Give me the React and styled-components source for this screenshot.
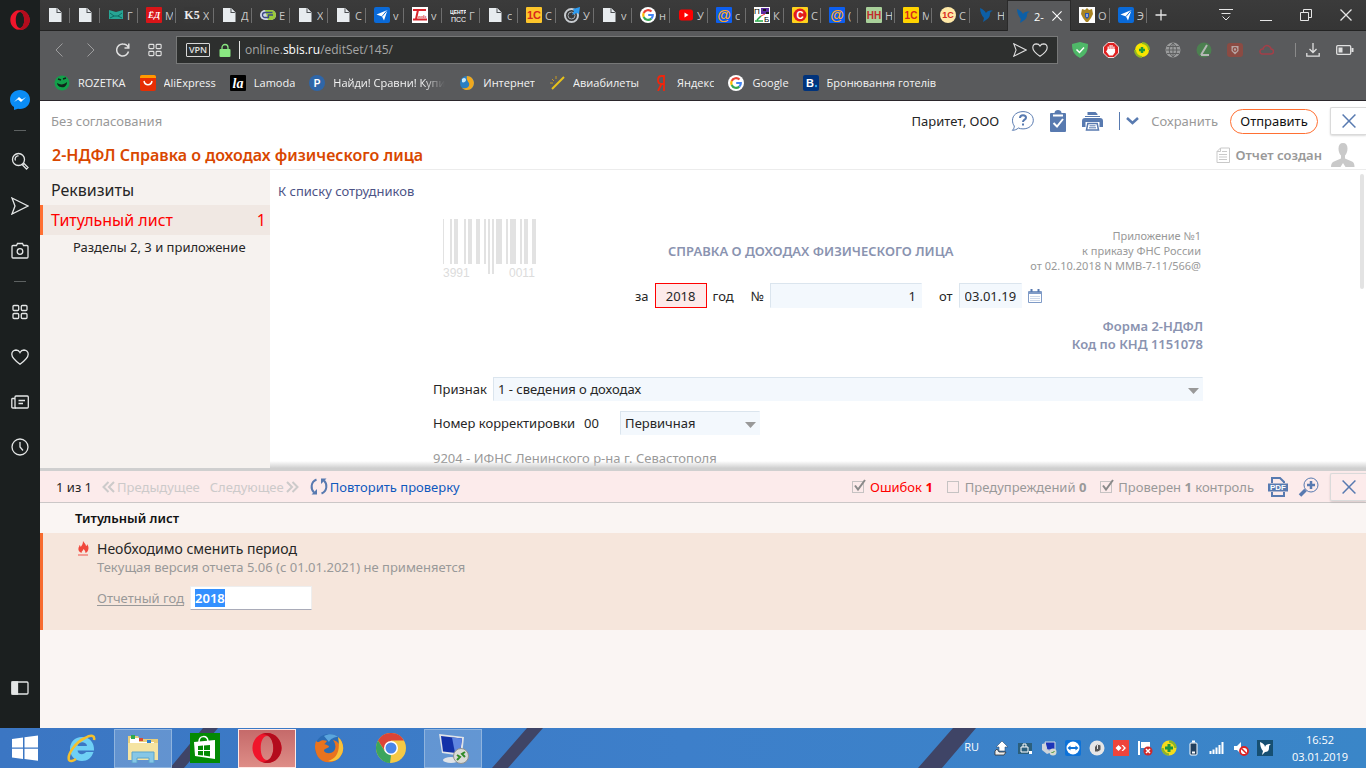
import React, { useEffect, useRef } from 'react'
import styled, { createGlobalStyle } from 'styled-components'

const GlobalStyle = createGlobalStyle`
  * { box-sizing: border-box; }
  body { margin: 0; font-family: "Noto Sans", "Open Sans", sans-serif; font-size: 13px; color: #262626; }
  button, input, select { font: inherit; color: inherit; margin: 0; }
  button { border: 0; padding: 0; background: none; cursor: pointer; }
  a { color: inherit; text-decoration: none; }
  svg { display: block; flex: none; }
`

/* ---------- shell ---------- */

const Screen = styled.div`
  display: flex;
  flex-direction: column;
  height: 100vh;
  overflow: hidden;
`
const Workspace = styled.div`
  display: flex;
  flex: 1;
  min-height: 0;
`
const Browser = styled.div`
  display: flex;
  flex-direction: column;
  flex: 1;
  min-width: 0;
`

/* ---------- opera sidebar ---------- */

const OperaBar = styled.nav`
  display: flex;
  flex-direction: column;
  align-items: center;
  width: 40px;
  background: #1b1f1f;
  color: #e4e6e6;
`
const SideButton = styled.button`
  display: grid;
  place-items: center;
  width: 40px;
  height: ${(p) => p.$h || 45}px;
  margin-top: ${(p) => p.$top || '0'};
  margin-bottom: ${(p) => p.$bottom || '0'};
`
const Dash = styled.span`
  width: 12px;
  height: 1px;
  margin: 8px 0 7px;
  background: #5d6161;
`

/* ---------- tabs ---------- */

const TabStrip = styled.div`
  display: flex;
  height: 31px;
  background: linear-gradient(#3b3b3b, #353535);
  border-bottom: 1px solid #232323;
  color: #c9c9c9;
  font: 11px "Open Sans", sans-serif;
`
const Tab = styled.button`
  position: relative;
  display: flex;
  align-items: center;
  gap: 3px;
  flex: 0 1 ${(p) => p.$w}px;
  height: 30px;
  padding: 0 3px 0 8px;
  overflow: hidden;
  &::after {
    content: '';
    position: absolute;
    right: 0;
    top: 8px;
    width: 1px;
    height: 15px;
    background: ${(p) => (p.$plain ? 'transparent' : '#6e6e6e')};
  }
`
const TabLabel = styled.span`
  overflow: hidden;
  white-space: nowrap;
`
const ActiveTab = styled.div`
  display: flex;
  align-items: center;
  gap: 3px;
  width: 64px;
  height: 31px;
  padding: 0 8px 0 7px;
  background: #595a5c;
  border: 1px solid #2a2a2a;
  border-bottom: 0;
  color: #ffffff;
  ${TabLabel} { flex: 1; }
`
const WindowButtons = styled.div`
  display: flex;
  margin-left: auto;
  color: #e6e6e6;
`
const WindowButton = styled.button`
  display: grid;
  place-items: center;
  width: ${(p) => p.$w || 40}px;
  height: 30px;
  color: #e6e6e6;
`

/* ---------- address row ---------- */

const AddressRow = styled.div`
  display: flex;
  align-items: center;
  height: 38px;
  background: #595a5c;
  color: #e0e0e0;
`
const NavButton = styled.button`
  display: grid;
  place-items: center;
  width: 32px;
  height: 32px;
  opacity: ${(p) => (p.disabled ? 0.5 : 1)};
`
const NavGroup = styled.div`
  display: flex;
  padding: 0 5px 0 3px;
`
const UrlBox = styled.div`
  display: flex;
  align-items: center;
  flex: 1;
  height: 28px;
  padding: 0 9px;
  background: #2d2f2e;
  border: 1px solid #777878;
  font: 12px "Open Sans", sans-serif;
`
const Vpn = styled.span`
  width: 24px;
  height: 14px;
  margin-right: 9px;
  border: 1px solid #d8d8d8;
  border-radius: 1px;
  font-size: 9px;
  font-weight: 600;
  line-height: 12px;
  text-align: center;
`
const Url = styled.span`
  flex: 1;
  margin-left: 8px;
  padding-left: 5px;
  border-left: 1px solid #e6e6e6;
  line-height: 18px;
  color: #a5a6a6;
  b { color: #ffffff; font-weight: 400; }
`
const UrlActions = styled.div`
  display: flex;
  gap: 5px;
`
const Extensions = styled.div`
  display: flex;
  align-items: center;
  gap: 15px;
  padding: 0 21px 0 14px;
`
const BrowserTools = styled.div`
  display: flex;
  align-items: center;
  gap: 16px;
  padding: 0 12px 0 10px;
  border-left: 1px solid #8a8a8a;
`
const Bookmarks = styled.div`
  display: flex;
  align-items: center;
  gap: 14px;
  height: 32px;
  padding: 0 14px 4px;
  background: #595a5c;
  border-bottom: 1px solid #2b272c;
  color: #f3f3f3;
  font: 11px "Open Sans", sans-serif;
`
const Bookmark = styled.a`
  display: flex;
  align-items: center;
  gap: 8px;
  white-space: nowrap;
`
const BookmarkLabel = styled.span`
  width: ${(p) => (p.$fade ? '112px' : 'auto')};
  overflow: hidden;
  mask-image: ${(p) => (p.$fade ? 'linear-gradient(90deg, #000 80%, transparent)' : 'none')};
`

/* ---------- report page ---------- */

const Page = styled.main`
  display: flex;
  flex-direction: column;
  flex: 1;
  min-height: 0;
  background: #ffffff;
`
const ReportHeader = styled.header`
  border-bottom: 1px solid #ececec;
`
const TopLine = styled.div`
  display: flex;
  align-items: center;
  height: 40px;
  padding-left: 11px;
  color: #999999;
`
const TopActions = styled.div`
  display: flex;
  align-items: center;
  gap: 12px;
  margin-left: auto;
`
const Company = styled.span`
  color: #262626;
`
const IconButton = styled.button`
  display: grid;
  place-items: center;
  height: 25px;
  color: #587ab0;
`
const MoreButton = styled(IconButton)`
  height: 18px;
  padding-left: 6px;
  margin-left: 4px;
  border-left: 1px solid #587ab0;
`
const SendButton = styled.button`
  width: 88px;
  height: 25px;
  border: 1px solid #ff7033;
  border-radius: 13px;
  color: #111111;
`
const CloseButton = styled.button`
  display: grid;
  place-items: center;
  width: 36px;
  height: 28px;
  border: 1px solid #dadada;
  border-right: 0;
  border-radius: 2px 0 0 2px;
  box-shadow: 0 1px 2px rgba(0, 0, 0, 0.15);
  color: #587ab0;
`
const TitleLine = styled.div`
  display: flex;
  align-items: center;
  height: 28px;
  padding: 0 11px 0 12px;
`
const ReportTitle = styled.h1`
  margin: 0;
  color: #d94700;
  font-size: 16px;
  font-weight: 600;
  line-height: 24px;
`
const Status = styled.div`
  display: flex;
  align-items: center;
  gap: 5px;
  margin-left: auto;
  color: #999999;
  font-weight: 600;
`
const Split = styled.div`
  display: flex;
  flex: 1;
  min-height: 0;
`
const Sections = styled.nav`
  width: 230px;
  padding-top: 5px;
  background: #f6f2ef;
`
const Section = styled.a`
  display: flex;
  justify-content: space-between;
  align-items: center;
  height: 30px;
  padding: 0 4px 0 8px;
  border-left: 3px solid ${(p) => (p.$active ? '#ff7033' : 'transparent')};
  background: ${(p) => (p.$active ? '#f0e8e3' : 'transparent')};
  color: ${(p) => (p.$active ? '#ff0000' : '#262626')};
  font-size: 16px;
`
const SubSection = styled.a`
  display: block;
  padding-left: 33px;
  line-height: 24px;
`
const DocumentPane = styled.section`
  position: relative;
  flex: 1;
  overflow: hidden;
  &::after {
    content: '';
    position: absolute;
    inset: auto 0 0 0;
    height: 7px;
    background: linear-gradient(rgba(200, 200, 200, 0), #d0d0d0);
  }
`
const ScrollThumb = styled.div`
  position: absolute;
  top: 4px;
  right: 2px;
  width: 4px;
  height: 115px;
  border-radius: 2px;
  background: #e3e3e3;
`
const BackLink = styled.a`
  display: block;
  padding: 11px 0 16px 8px;
  color: #4c5386;
  line-height: 20px;
`
const Form = styled.form`
  width: 770px;
  max-width: 100%;
  margin: 0 auto;
`
const FormHead = styled.div`
  display: grid;
  grid-template-columns: 225px auto 1fr;
  align-items: center;
  height: 61px;
  padding: 0 2px 0 10px;
`
const FormTitle = styled.h2`
  margin: 6px 0 0;
  color: #8a93b0;
  font-size: 13px;
  font-weight: 600;
  line-height: 18px;
`
const Decree = styled.p`
  margin: 6px 0 0;
  color: #999999;
  font-size: 11px;
  line-height: 15px;
  text-align: right;
`
const Row = styled.div`
  display: flex;
  align-items: center;
  gap: ${(p) => p.$gap || 8}px;
  margin-top: ${(p) => p.$top || 0}px;
  padding-left: ${(p) => p.$left || 0}px;
`
const Field = styled.input`
  width: ${(p) => p.$w}px;
  height: 25px;
  padding: 0 5px;
  border: 1px solid #dbe5ee;
  border-right-color: #f3f8fd;
  border-bottom-color: #f3f8fd;
  background: #f3f8fd;
  text-align: ${(p) => p.$align || 'left'};
`
const YearField = styled(Field)`
  border-color: #ff0000;
  background: #fdeaea;
`
const PlainField = styled(Field)`
  padding: 0;
  border-color: transparent;
  background: transparent;
`
const FormCode = styled.p`
  margin: 9px 0 0;
  color: #8a93b0;
  font-weight: 600;
  line-height: 18px;
  text-align: right;
`
const SelectWrap = styled.span`
  position: relative;
  flex: ${(p) => (p.$w ? `0 0 ${p.$w}px` : '1')};
  svg { position: absolute; right: 4px; top: 11px; pointer-events: none; }
`
const Select = styled.select`
  display: block;
  width: 100%;
  height: 24px;
  padding: 0 4px;
  appearance: none;
  border: 1px solid #dbe5ee;
  border-right-color: #f3f8fd;
  border-bottom-color: #f3f8fd;
  border-radius: 0;
  background: #f3f8fd;
`
const Inspection = styled.p`
  margin: 13px 0 0;
  color: #999999;
  line-height: 20px;
`

/* ---------- check results ---------- */

const Results = styled.section`
  height: 260px;
  border-top: 3px solid #cfcfcf;
  background: #faf5f3;
`
const ResultsBar = styled.div`
  display: flex;
  align-items: center;
  height: 32px;
  padding-left: 16px;
  background: #fcebeb;
  border-bottom: 1px solid #cbc7c7;
`
const Pager = styled.button`
  display: flex;
  align-items: center;
  gap: 2px;
  margin-left: 10px;
  color: #cccaca;
`
const Recheck = styled.button`
  display: flex;
  align-items: center;
  gap: 2px;
  margin-left: 11px;
  color: #0f59bd;
`
const Filters = styled.div`
  display: flex;
  align-items: center;
  gap: 10px;
  margin-left: auto;
`
const Filter = styled.label`
  position: relative;
  display: flex;
  align-items: center;
  gap: 6px;
  margin-right: 4px;
  color: ${(p) => p.$color || '#999999'};
  input {
    width: 12px;
    height: 12px;
    appearance: none;
    border: 1px solid #c6c3c3;
  }
  svg { position: absolute; left: 0; top: 1px; }
`
const ResultTitle = styled.h3`
  margin: 0;
  padding-left: 35px;
  color: #111111;
  font-size: 13px;
  font-weight: 600;
  line-height: 30px;
`
const ErrorCard = styled.article`
  display: flex;
  gap: 7px;
  height: 97px;
  padding: 6px 0 0 33px;
  border-left: 3px solid #f76b2f;
  background: #f6e6dc;
`
const ErrorText = styled.p`
  margin: 0;
  font-size: ${(p) => (p.$note ? 13 : 14)}px;
  line-height: ${(p) => (p.$note ? 16 : 20)}px;
  color: ${(p) => (p.$note ? '#999999' : '#262626')};
`
const FixLabel = styled.label`
  color: #999999;
  text-decoration: underline;
  text-underline-offset: 2px;
`
const FixField = styled.input`
  width: 122px;
  height: 24px;
  padding: 0 4px;
  border: 1px solid #eeeeee;
  border-bottom-color: #a9abb8;
  background: #ffffff;
  outline: none;
  font-weight: 600;
  &::selection { background: #3390ff; color: #ffffff; }
`

/* ---------- taskbar ---------- */

const Taskbar = styled.footer`
  position: relative;
  display: flex;
  align-items: center;
  height: 40px;
  background: linear-gradient(90deg, #3b76c3, #3d7fca 50%, #3a86c8);
`
const Wallpaper = styled.svg`
  position: absolute;
  inset: 0;
  width: 100%;
  height: 40px;
`
const StartButton = styled.button`
  position: relative;
  display: grid;
  place-items: center;
  width: 50px;
  height: 40px;
`
const TaskButton = styled.button`
  position: relative;
  display: grid;
  place-items: center;
  width: 58px;
  height: 39px;
  margin: 0 2px;
  border: 1px solid ${(p) => (p.$open ? '#8fb4de' : 'transparent')};
  background: ${(p) => (p.$open ? 'rgba(255, 255, 255, 0.2)' : 'none')};
`
const OperaTask = styled(TaskButton)`
  border-color: #ffe9e6;
  background: linear-gradient(#c56a6a, #de8d87);
`
const Tray = styled.div`
  position: relative;
  display: flex;
  align-items: center;
  margin-left: auto;
  color: #ffffff;
  font: 11px "Open Sans", sans-serif;
`
const TrayButton = styled.button`
  display: grid;
  place-items: center;
  width: 24px;
  height: 40px;
`
const Language = styled.span`
  margin: 0 10px 4px 0;
`
const Clock = styled.time`
  width: 80px;
  margin: 0 6px 0 3px;
  line-height: 17px;
  text-align: center;
`

/* ---------- drawings ---------- */

const Icon = ({ size = 16, w, h, vb, children, ...rest }) => (
  <svg
    width={w || size}
    height={h || size}
    viewBox={vb || `0 0 ${w || size} ${h || size}`}
    fill="none"
    stroke="currentColor"
    aria-hidden="true"
    {...rest}
  >
    {children}
  </svg>
)

const DocFav = () => (
  <Icon stroke="none"><path d="M1 1h8l4.500 4.500V15H1z" fill="#e8ecef" /><path d="M8.500 1v5h5z" fill="#4a4d50" /><path d="M9.500 1.500v3.500h3.500z" fill="#e8ecef" /></Icon>
)
const TealFav = () => (
  <Icon stroke="none"><path d="M1 3l7 2 7-2v9H1z" fill="#27a595" /><path d="M2 6l4 3-4 2M14 6l-4 3 4 2M6 9h4" stroke="#0c6b62" /></Icon>
)
const LetterFav = ({ bg, fg, text, size = 11, font = 'Liberation Sans', round, italic, ring }) => (
  <Icon stroke="none">
    <rect width="16" height="16" rx={round ? 8 : 1} fill={bg} />
    {ring && <circle cx="8" cy="8" r="6.500" fill={ring} />}
    <text x="8" y={8 + size * 0.36} fill={fg} fontSize={size} fontWeight="700" fontStyle={italic ? 'italic' : 'normal'} fontFamily={font} textAnchor="middle">{text}</text>
  </Icon>
)
const GreenFav = () => (
  <Icon stroke="none"><rect x="0" y="3" width="16" height="10" rx="5" fill="#cfd6e6" /><path d="M5 3h6a5 5 0 015 5 5 5 0 01-5 5H8z" fill="#9acb3b" /><path d="M12.500 5.500H5a2.500 2.500 0 000 5h3.500V8H13" stroke="#3b4a86" strokeWidth="1.300" /></Icon>
)
const PlaneFav = () => (
  <Icon stroke="none"><rect width="16" height="16" rx="2" fill="#0a6ad8" /><path d="M2.500 7.500L13.500 3l-3.500 10.500-2-4z" fill="#fff" /><path d="M8 9.500L13.500 3" stroke="#0a6ad8" /></Icon>
)
const ToolsFav = () => (
  <Icon stroke="none"><rect width="16" height="16" fill="#fff" /><path d="M1 3h13M6 3L4 12M1 12.500h14" stroke="#d8232a" strokeWidth="2" /><text x="6" y="11" fill="#d8232a" fontSize="5" fontWeight="700" fontFamily="Liberation Serif" fontStyle="italic">ools</text></Icon>
)
const CenterFav = () => (
  <Icon stroke="none"><text x="0" y="7" fill="#fff" fontSize="5" fontFamily="Liberation Sans" fontWeight="700">ЦЕНТР</text><text x="1" y="15" fill="#fff" fontSize="7" fontFamily="Liberation Sans">ПСС</text></Icon>
)
const GaugeFav = () => (
  <Icon><circle cx="7.500" cy="8.500" r="6.500" stroke="#c8ccd0" strokeWidth="2" /><circle cx="7.500" cy="8.500" r="3.500" stroke="#a6acb2" /><path d="M8 8l2-4-1-2 7-2-1 7-2-1z" fill="#2d9bf0" stroke="none" /></Icon>
)
const GoogleFav = () => (
  <Icon stroke="none" strokeWidth="2.200">
    <circle cx="8" cy="8" r="8" fill="#fff" />
    <path d="M11.500 4.600A4.800 4.800 0 003.700 6" stroke="#ea4335" />
    <path d="M3.700 6a4.800 4.800 0 000 4" stroke="#fbbc05" />
    <path d="M3.700 10a4.800 4.800 0 007.600 1.600" stroke="#34a853" />
    <path d="M11.300 11.600A4.600 4.600 0 0012.800 8H8.200" stroke="#4285f4" />
  </Icon>
)
const YoutubeFav = () => (
  <Icon stroke="none"><rect x="1" y="2.500" width="14" height="11" rx="2.500" fill="#f00" /><path d="M6.500 5.500v5l4-2.500z" fill="#fff" /></Icon>
)
const PbFav = () => (
  <Icon stroke="none"><rect width="16" height="16" fill="#fff" /><rect x="7" y="1" width="8" height="6" fill="#5a2ca0" /><path d="M9 2h3v2H9zM12 5h3v2h-3z" fill="#1a1a1a" /><path d="M1 14h8M3 13l4-4" stroke="#23a845" strokeWidth="1.500" /><path d="M7 9l4-2" stroke="#e33" /><text x="0" y="7" fill="#000" fontSize="8" fontFamily="Liberation Sans">П</text><text x="10" y="15" fill="#000" fontSize="8" fontFamily="Liberation Sans">Б</text></Icon>
)
const BirdFav = ({ color = '#0d5fa6' }) => (
  <Icon stroke="none"><path d="M2 1c3 1 5 3 6 5 1-2 4-3 7-2-2 0-3 1-3 3 0 3-2 5-4 6l-3 2 1-4C4 9 2 5 2 1z" fill={color} /></Icon>
)
const EagleFav = () => (
  <Icon stroke="none"><rect width="16" height="16" fill="#fff" /><path d="M8 1l2 2 3-1 1 5-2 4-3 4H7l-3-4-2-4 1-5 3 1z" fill="#a98524" /><path d="M6 6h4v4l-2 2-2-2z" fill="#2b56b0" /><path d="M7.500 7h1v3h-1z" fill="#fff" /></Icon>
)
const OperaLogo = ({ size = 20 }) => (
  <Icon size={size} vb="0 0 20 20" stroke="none"><path fillRule="evenodd" d="M10 0c5.500 0 9.700 4.500 9.700 10S15.500 20 10 20 .3 15.500.3 10 4.500 0 10 0zm0 2C7.200 2 5.800 6 5.800 10S7.200 18 10 18s4.200-4 4.200-8S12.800 2 10 2z" fill="#f0152b" /><path d="M10 0c5.500 0 9.700 4.500 9.700 10S15.500 20 10 20c-1.500 0-3-.4-4-1 5 1 8.200-3.500 8.200-9S11 0 6 1c1-.6 2.500-1 4-1z" fill="#b30c1d" /></Icon>
)
const HeartIcon = ({ w = 18, h = 16 }) => (
  <Icon w={w} h={h} vb="0 0 18 16" strokeWidth="1.300"><path d="M9 15.200C4.500 12 .8 9 .8 5.300A4.300 4.300 0 015 1c1.800 0 3.200 1 4 2.500C9.800 2 11.200 1 13 1a4.300 4.300 0 014.200 4.300C17.200 9 13.500 12 9 15.200z" /></Icon>
)
const SendIcon = ({ w = 18, h = 18 }) => (
  <Icon w={w} h={h} vb="0 0 18 18" strokeWidth="1.300"><path d="M1 1l16 8L1 17l3-8z" /></Icon>
)
const GridIcon = ({ size = 16 }) => (
  <Icon size={size} vb="0 0 16 16" strokeWidth="1.300"><rect x="1" y="1.500" width="5.700" height="5" rx="1" /><rect x="9.300" y="1.500" width="5.700" height="5" rx="1" /><rect x="1" y="9.500" width="5.700" height="5" rx="1" /><rect x="9.300" y="9.500" width="5.700" height="5" rx="1" /></Icon>
)
const CrossIcon = ({ size = 12, width = 1.3 }) => (
  <Icon size={size} vb="0 0 12 12" strokeWidth={width}><path d="M.5.5l11 11M11.500.5l-11 11" /></Icon>
)
const BigCross = () => <CrossIcon size={14} />

const Arrow = () => (
  <Icon w={11} h={6} stroke="none"><path d="M0 0h11L5.500 6z" fill="#999" /></Icon>
)
const Tick = () => (
  <Icon size={14} stroke="#8a8a8a" strokeWidth="2"><path d="M3 6.500l3 4L13 1" /></Icon>
)
const Chevrons = ({ right }) => (
  <Icon w={13} h={12} strokeWidth="2" transform={right ? 'rotate(180)' : undefined}><path d="M6.500 1L1.500 6l5 5M12 1L7 6l5 5" /></Icon>
)

const bars = [
  [0, 1], [7, 2], [11, 4], [21, 2], [25, 4], [33, 4], [41, 2], [45, 2, 1], [49, 2, 1], [53, 6],
  [63, 2], [67, 6], [77, 2], [81, 4], [89, 4],
]
const Barcode = () => (
  <Icon w={96} h={60} stroke="none">
    {bars.map(([x, w, long]) => (
      <rect key={x} x={x} y="1" width={w} height={long ? 55 : 45} fill="#e2e2e2" />
    ))}
    <text x="0" y="59" fill="#dcdcdc" fontSize="12" fontFamily="Liberation Sans">3991</text>
    <text x="66" y="59" fill="#dcdcdc" fontSize="12" fontFamily="Liberation Sans">0011</text>
  </Icon>
)

/* ---------- data ---------- */

const tabs = [
  { w: 30, icon: <DocFav /> },
  { w: 30, icon: <DocFav /> },
  { w: 38, icon: <TealFav />, label: 'Г' },
  { w: 38, icon: <LetterFav bg="#d91518" fg="#fff" text="ЁД" size={9} font="Liberation Serif" italic />, label: 'М' },
  { w: 38, icon: <LetterFav bg="#383838" fg="#eee" text="K5" size={12} font="Liberation Serif" />, label: 'Х' },
  { w: 38, icon: <DocFav />, label: 'Д' },
  { w: 38, icon: <GreenFav />, label: 'Е' },
  { w: 38, icon: <DocFav />, label: 'Х' },
  { w: 38, icon: <DocFav />, label: 'С' },
  { w: 38, icon: <PlaneFav />, label: 'v' },
  { w: 38, icon: <ToolsFav />, label: 'v' },
  { w: 38, icon: <CenterFav />, label: 'Г' },
  { w: 38, icon: <DocFav />, label: 'с' },
  { w: 38, icon: <LetterFav bg="#fdc62b" fg="#d8281c" text="1С" size={11} />, label: 'С' },
  { w: 38, icon: <GaugeFav />, label: 'У' },
  { w: 38, icon: <DocFav />, label: 'v' },
  { w: 38, icon: <GoogleFav />, label: 'н' },
  { w: 38, icon: <YoutubeFav />, label: 'У' },
  { w: 38, icon: <LetterFav bg="#0d5ff0" fg="#ffa81f" text="@" size={14} />, label: 'с' },
  { w: 38, icon: <PbFav />, label: 'К' },
  { w: 37, icon: <LetterFav bg="#ffd21c" ring="#e31b1b" fg="#fff" text="C" size={10} />, label: 'С' },
  { w: 37, icon: <LetterFav bg="#0d5ff0" fg="#ffa81f" text="@" size={14} />, label: '(' },
  { w: 37, icon: <LetterFav bg="#a9d09a" fg="#c22a2a" text="НН" size={10} />, label: 'Н' },
  { w: 37, icon: <LetterFav bg="#ffd400" fg="#d8281c" text="1С" size={10} />, label: 'М' },
  { w: 38, icon: <LetterFav bg="#ffe9a8" fg="#d8281c" text="1С" size={9} round />, label: 'С' },
  { w: 37, icon: <BirdFav />, label: 'Н', plain: true },
]

const bookmarks = [
  { label: 'ROZETKA', icon: <Icon stroke="none"><circle cx="8" cy="8" r="7.500" fill="#12a04a" /><path d="M3 8c3 2 7 2 10-1 0 4-3 6-6 5-2 0-4-2-4-4z" fill="#10241a" /><path d="M4 4l3 1M9 4l3-1" stroke="#10241a" strokeWidth="1.500" /></Icon> },
  { label: 'AliExpress', icon: <Icon stroke="none"><rect width="16" height="16" rx="2" fill="#e62e04" /><path d="M0 3V2a2 2 0 012-2h12a2 2 0 012 2v1z" fill="#ff9a00" /><path d="M4 6c1 5 7 5 8 0" stroke="#fff" strokeWidth="1.500" /></Icon> },
  { label: 'Lamoda', icon: <LetterFav bg="#000" fg="#fff" text="la" size={14} font="Liberation Serif" italic /> },
  { label: 'Найди! Сравни! Купи!', icon: <LetterFav bg="#2f66a8" fg="#fff" text="P" size={10} round />, fade: true },
  { label: 'Интернет', icon: <Icon stroke="none"><circle cx="8" cy="8" r="7" fill="#2a7fc4" /><path d="M8 1a7 7 0 11-5 12c5 1 8-1 7-5-1-2-3-3-2-7z" fill="#f0a81e" /><path d="M3 4c2-2 4-1 4 1S4 8 3 7z" fill="#c7e8fa" /></Icon> },
  { label: 'Авиабилеты', icon: <Icon><path d="M3 14L15 2" stroke="#e8c21a" strokeWidth="2" /><path d="M3 4l2 2M7 1v3M1 8h3" stroke="#c89b20" /></Icon> },
  { label: 'Яндекс', icon: <Icon stroke="none" strokeWidth="1.800"><path d="M11 16V1H8.500C6.500 1 5 2.500 5 5s1.500 4 3.500 4H11M8.500 9L5 16" stroke="#f0260d" /></Icon> },
  { label: 'Google', icon: <GoogleFav /> },
  { label: 'Бронювання готелів', icon: <Icon stroke="none"><rect width="16" height="16" rx="2" fill="#00337c" /><text x="3" y="12" fill="#fff" fontSize="11" fontWeight="700" fontFamily="Liberation Sans">B</text><circle cx="13" cy="11" r="1.200" fill="#2aa5f0" /></Icon> },
]

const extensions = [
  <path key="a" d="M8 0l8 2c0 7-2 11-8 14C2 13 0 9 0 2z" fill="#4fb868" />,
  <path key="b" d="M5 .5h6L15.500 5v6L11 15.500H5L.5 11V5z" fill="#e02020" stroke="#f3dede" />,
  <circle key="c" cx="8" cy="8" r="7" fill="#f7e600" />,
  <circle key="d" cx="8" cy="8" r="7.500" fill="#9b9c9d" />,
  <circle key="e" cx="8" cy="8" r="7.500" fill="#4c8050" />,
  <rect key="f" x="0" y="1" width="16" height="14" rx="3" fill="#8b4b43" />,
  <path key="g" d="M4 12h9a2.500 2.500 0 000-5 4 4 0 00-7-2c-1 1-1 2-1 2a2.500 2.500 0 00-1 5z" stroke="#a33f48" strokeWidth="1.500" />,
]
const marks = [
  <path key="a" d="M4.500 7.500l3 3 4.500-5" stroke="#fff" strokeWidth="1.500" />,
  <path key="b" d="M5.200 8V4.500M7.100 8V3M9 8V3M10.900 8V4.500M4.500 7.500h7V10l-2 3h-3l-3-4" fill="#fff" stroke="#fff" strokeWidth="1.200" />,
  <g key="c"><path d="M8 1a7 7 0 017 7M8 15a7 7 0 01-7-7" stroke="#8fb820" strokeWidth="2" /><path d="M8 5v6M5 8h6" stroke="#1b9a3c" strokeWidth="2.500" /></g>,
  <path key="d" d="M1 8h14M8 1v14M2 4.500h12M2 11.500h12M8 1C3 5 3 11 8 15M8 1c5 4 5 10 0 14" stroke="#5f6061" />,
  <path key="e" d="M5 13l6-10M5 13h8" stroke="#b6b6b6" strokeWidth="2" />,
  <g key="f"><path d="M4.500 4h7v5L8 12.500 4.500 9z" fill="#b7a5a3" /><circle cx="8" cy="7.500" r="1.800" stroke="#8b4b43" strokeWidth="1.200" /></g>,
  null,
]

const tray = [
  ['Съёмные устройства', <g key="1"><path d="M9 1l6 6h-3v4H6V7H3z" fill="#fff" stroke="#33506e" strokeWidth=".6" /><path d="M4 9l-2 2v4h9l2-3H6z" fill="#eee" stroke="#333" strokeWidth=".8" /></g>],
  ['Безопасность', <g key="2"><rect x="1" y="3" width="14" height="11" fill="#2b5f7c" /><path d="M4 7h7v5H4zM6 7V4h3v3" stroke="#fff" /><path d="M12 11h3v3h-3z" fill="#fff" /></g>],
  ['Удалённый рабочий стол', <g key="3"><path d="M4 2h10v8H6z" fill="#1c35b8" stroke="#d8dde4" /><path d="M1 4l4-1v6l6 3-5 2-5-4z" fill="#cfd4da" /><circle cx="12" cy="12" r="3.500" fill="#d5d9cf" /><path d="M10.500 12l1 1 2-2" stroke="#3b8f2a" /></g>],
  ['TeamViewer', <g key="4"><rect width="16" height="16" rx="2" fill="#0d72d8" /><circle cx="8" cy="8" r="6.500" fill="#fff" /><path d="M2.500 8l3-2.500V7h5V5.500l3 2.500-3 2.500V9h-5v1.500z" fill="#0d72d8" /></g>],
  ['Ключ', <g key="5"><circle cx="8" cy="8" r="7.500" fill="#e6e6e6" /><path d="M5.500 7L8 4l4 1v5l-3 2H5.500zM8.500 5v4" fill="#555" stroke="#e6e6e6" /></g>],
  ['AnyDesk', <g key="6"><rect width="16" height="16" fill="#ef443b" /><path d="M5.500 5l3 3-3 3-3-3zM8.500 5H10l3 3-3 3H8.500l2.500-3z" fill="#fff" /></g>],
  ['Центр поддержки', <g key="7"><path d="M2 1v14" stroke="#fff" strokeWidth="2" /><path d="M4 2h9v6H4z" fill="#fff" /><circle cx="11" cy="11" r="4.500" fill="#cf2a2a" /><path d="M9 9l4 4M13 9l-4 4" stroke="#fff" strokeWidth="1.500" /></g>],
  ['Антивирус', <g key="8"><circle cx="8" cy="8" r="7.500" fill="#f5dc1c" /><path d="M8 1.500a6.500 6.500 0 016.500 6.500M8 14.500A6.500 6.500 0 011.500 8" stroke="#8db52a" strokeWidth="2.500" /><path d="M8 4v8M4 8h8" stroke="#1c9440" strokeWidth="3" /></g>],
  ['Батарея', <g key="9" stroke="#fff"><rect x="5" y="3" width="7" height="12" rx="1" fill="#22405f" /><path d="M7 1.500h3M7 12.500h3" strokeWidth="2" /></g>],
  ['Сеть', <path key="10" d="M1.500 14v-3M4.500 14V9.500M7.500 14V7.500M10.500 14V5M13.500 14V2" stroke="#fff" strokeWidth="2" />],
  ['Звук', <g key="11"><path d="M1 6h3l4-4v12l-4-4H1z" fill="#fff" /><circle cx="11" cy="11" r="4" fill="#fff" stroke="#d22" strokeWidth="1.800" /><path d="M8.500 8.500l5 5" stroke="#d22" strokeWidth="1.500" /></g>],
  ['СБИС', <g key="12"><rect width="16" height="16" fill="#164f72" /><path d="M3 2c3 1 5 3 5 5 1-3 3-3 6-3-2 1-2 2-2 4 0 3-2 4-4 4l-3 3 1-4C4 9 3 5 3 2z" fill="#fff" /></g>],
]

const SidePanel = () => (
  <OperaBar>
    <SideButton $h={40} aria-label="Opera"><OperaLogo /></SideButton>
    <SideButton $top="37px" aria-label="Messenger">
      <Icon size={20} stroke="none"><path d="M10 0c5.600 0 10 4 10 9.500S15.600 19 10 19l-2-.2L4 20v-3C1.500 15.500 0 13 0 9.500 0 4 4.400 0 10 0z" fill="#0a8cf5" /><path d="M4 12l5-5 3 2.500L16 7l-5 5-3-2.500z" fill="#fff" /></Icon>
    </SideButton>
    <Dash />
    <SideButton aria-label="Поиск">
      <Icon size={18} strokeWidth="1.300"><circle cx="7.500" cy="7.500" r="6" /><path d="M4.500 8.500a3 3 0 013-4.500M12 12.500l1-1 4 4-1.500 1.500-4-4z" /></Icon>
    </SideButton>
    <SideButton aria-label="Моя лента"><SendIcon /></SideButton>
    <SideButton aria-label="Снимок"><Icon size={18} strokeWidth="1.300"><path d="M2 3.500h3.500L6.500 1.500h5l1 2H16a1 1 0 011 1V15a1 1 0 01-1 1H2a1 1 0 01-1-1V4.500a1 1 0 011-1z" /><circle cx="9" cy="9.500" r="2.800" /></Icon></SideButton>
    <Dash />
    <SideButton aria-label="Экспресс-панель"><GridIcon /></SideButton>
    <SideButton aria-label="Закладки"><HeartIcon /></SideButton>
    <SideButton aria-label="Новости"><Icon size={18} strokeWidth="1.300"><rect x="4" y="3" width="13.300" height="12" rx="1" /><path d="M4 5.500H1.500A.8.8 0 00.8 6v8a1 1 0 001 1H5M7.500 7.500H14M7.500 10.500H12" /></Icon></SideButton>
    <SideButton aria-label="История"><Icon size={18} strokeWidth="1.300"><circle cx="9" cy="9" r="8" /><path d="M9 4v5l3 3.500" /></Icon></SideButton>
    <SideButton $top="auto" $bottom="18px" aria-label="Боковая панель"><Icon size={18} strokeWidth="1.300"><rect x="1" y="3" width="16" height="12" rx="1" /><path d="M1 3h5.500v12H1z" fill="currentColor" /></Icon></SideButton>
  </OperaBar>
)

const BrowserChrome = () => (
  <>
    <TabStrip>
      {tabs.map((t, i) => (
        <Tab key={i} $w={t.w} $plain={t.plain} aria-label={t.label ? undefined : 'Вкладка'}>
          {t.icon}
          {t.label && <TabLabel>{t.label}</TabLabel>}
        </Tab>
      ))}
      <ActiveTab>
        <BirdFav />
        <TabLabel>2-</TabLabel>
        <button aria-label="Закрыть вкладку"><CrossIcon size={10} /></button>
      </ActiveTab>
      <Tab $w={39}><EagleFav /><TabLabel>О</TabLabel></Tab>
      <Tab $w={37}><PlaneFav /><TabLabel>Э</TabLabel></Tab>
      <WindowButton $w={27} aria-label="Новая вкладка"><Icon size={12}><path d="M6 .5v11M.5 6h11" strokeWidth="1.300" /></Icon></WindowButton>
      <WindowButtons>
        <WindowButton aria-label="Меню вкладок"><Icon w={14} h={12}><path d="M0 .5h14M2.500 4.500h9M3.500 7.500L7 11l3.500-3.500" /></Icon></WindowButton>
        <WindowButton aria-label="Свернуть"><Icon w={12} h={12}><path d="M0 11.500h12" /></Icon></WindowButton>
        <WindowButton aria-label="Восстановить"><Icon size={12}><path d="M.5 3.500h8v8h-8zM3.500 3.500v-3h8v8h-3" /></Icon></WindowButton>
        <WindowButton aria-label="Закрыть"><CrossIcon /></WindowButton>
      </WindowButtons>
    </TabStrip>
    <AddressRow>
      <NavGroup>
        <NavButton disabled aria-label="Назад"><Icon w={8} h={14}><path d="M7.500.5L1 7l6.500 6.500" /></Icon></NavButton>
        <NavButton disabled aria-label="Вперёд"><Icon w={8} h={14}><path d="M.5.5L7 7 .5 13.500" /></Icon></NavButton>
        <NavButton aria-label="Обновить"><Icon size={14} strokeWidth="1.500"><path d="M12.500 8.500A6 6 0 117 1c2.500 0 4.500 1.500 5.500 3.500M12.800.5v4.500H8.500" /></Icon></NavButton>
        <NavButton aria-label="Экспресс-панель"><GridIcon size={14} /></NavButton>
      </NavGroup>
      <UrlBox>
        <Vpn>VPN</Vpn>
        <Icon w={12} h={14} stroke="none"><path d="M3 7V4.500a3 3 0 016 0V7" stroke="#8ae882" strokeWidth="1.300" /><rect x=".5" y="6" width="11" height="8" rx="1" fill="#8ae882" /></Icon>
        <Url>online.<b>sbis.ru</b>/editSet/145/</Url>
        <UrlActions>
          <button aria-label="Отправить в Мою ленту"><SendIcon w={14} h={14} /></button>
          <button aria-label="В закладки"><HeartIcon w={16} h={14} /></button>
        </UrlActions>
      </UrlBox>
      <Extensions>
        {extensions.map((e, i) => (
          <button key={i} aria-label={`Расширение ${i + 1}`}><Icon stroke="none">{e}{marks[i]}</Icon></button>
        ))}
      </Extensions>
      <BrowserTools>
        <button aria-label="Загрузки"><Icon size={14} strokeWidth="1.300"><path d="M7 0v9M3.500 6L7 9.500 10.500 6M.8 10v3.200h12.400V10" /></Icon></button>
        <button aria-label="Экономия заряда"><Icon w={18} h={10} strokeWidth="1.300"><rect x=".7" y=".7" width="14" height="8.600" rx="1" /><path d="M16.500 3v4" strokeWidth="2" /><path d="M2.500 2.500h4v5h-4z" fill="currentColor" stroke="none" /></Icon></button>
      </BrowserTools>
    </AddressRow>
    <Bookmarks>
      {bookmarks.map((b) => (
        <Bookmark key={b.label} href="#">{b.icon}<BookmarkLabel $fade={b.fade}>{b.label}</BookmarkLabel></Bookmark>
      ))}
    </Bookmarks>
  </>
)

const Header = () => (
  <ReportHeader>
    <TopLine>
      <span>Без согласования</span>
      <TopActions>
        <Company>Паритет, ООО</Company>
        <IconButton aria-label="Справка">
          <Icon w={23} h={20}><path d="M12 .6c6 0 10.300 3.700 10.300 8.600S18 17.900 12 17.900c-1.800 0-3.300-.3-4.700-.9-1.300 1.400-3.600 2.300-6 2.300 1.500-1.300 2-2.700 2-4.300-1.200-1.500-1.800-3.500-1.800-5.800C1.500 4.300 6 .6 12 .6z" /><path d="M9 7c0-2 1.500-2.800 3-2.800s3 .8 3 2.500c0 2-3 2-3 4.300M12 12.500V14.500" strokeWidth="2" /></Icon>
        </IconButton>
        <IconButton aria-label="Задание">
          <Icon w={24} h={22} stroke="none"><path d="M5 3h3.500c0-2 1.500-3 3.500-3s3.500 1 3.500 3H19a1 1 0 011 1v17a1 1 0 01-1 1H5a1 1 0 01-1-1V4a1 1 0 011-1z" fill="#587ab0" /><path d="M7 5.500h10M7.500 13l3.500 3.500 6-7.500" stroke="#fff" strokeWidth="2" /></Icon>
        </IconButton>
        <IconButton aria-label="Печать">
          <Icon w={21} h={20} stroke="none"><path d="M5.500 4V1h8l2 2v1z" fill="#587ab0" /><path d="M3 5.500h15" stroke="#587ab0" /><path d="M0 10a3 3 0 013-3h15a3 3 0 013 3v6h-3.500v-5h-14v5H0z" fill="#587ab0" /><path d="M5.800 12.500h9.400L16.500 19h-12z" stroke="#587ab0" strokeWidth="1.500" /><path d="M7.500 14.800h6M7 16.800h7" stroke="#587ab0" /></Icon>
        </IconButton>
        <MoreButton aria-label="Ещё"><Icon w={13} h={8} strokeWidth="2.500"><path d="M1 1l5.500 5L12 1" /></Icon></MoreButton>
        <button>Сохранить</button>
        <SendButton>Отправить</SendButton>
        <CloseButton aria-label="Закрыть отчет"><BigCross /></CloseButton>
      </TopActions>
    </TopLine>
    <TitleLine>
      <ReportTitle>2-НДФЛ Справка о доходах физического лица</ReportTitle>
      <Status>
        <Icon w={14} h={16} stroke="#c9c9c9"><path d="M4.500 1h9v14.500H1V4.500zM4.500 1v3.500H1M6 4.500h5M3 7.500h8M3 10h8M3 12.500h8" /></Icon>
        Отчет создан
        <Icon w={28} h={24} stroke="none"><path d="M16 0c3 0 4.500 2 4.500 5.500 0 3-1 5.500-2.500 7v3l7 3c1.800.8 2.500 2.500 2.500 5.500h-9l-2.500-4-2.500 4H4c0-3 1-4.700 3-5.500l7-3v-3c-1.500-1.500-2.500-4-2.500-7C11.500 2 13 0 16 0z" fill="#c9c9c9" /></Icon>
      </Status>
    </TitleLine>
  </ReportHeader>
)

const ReportForm = () => (
  <Form>
    <FormHead>
      <Barcode />
      <FormTitle>СПРАВКА О ДОХОДАХ ФИЗИЧЕСКОГО ЛИЦА</FormTitle>
      <Decree>Приложение №1<br />к приказу ФНС России<br />от 02.10.2018 N ММВ-7-11/566@</Decree>
    </FormHead>
    <Row $top={5} $left={202} $gap={6}>
      <label htmlFor="year">за</label>
      <YearField id="year" $w={52} $align="center" defaultValue="2018" />
      <span>год</span>
      <Row as="label" htmlFor="number" $left={11}>№</Row>
      <Field id="number" $w={152} $align="right" defaultValue="1" />
      <Row as="label" htmlFor="date" $left={11}>от</Row>
      <Field id="date" $w={63} defaultValue="03.01.19" />
      <IconButton type="button" aria-label="Выбрать дату">
        <Icon w={14} h={14} stroke="none"><path d="M.5 2.500h13v11H.5z" stroke="#7f9bc7" fill="#fff" /><path d="M1 3h12v2H1z" fill="#7f9bc7" /><path d="M3.500 0v3M10.500 0v3" stroke="#587ab0" strokeWidth="2" /><path d="M2.500 7.500h9M2.500 9.500h9M2.500 11.500h9" stroke="#9fb4d6" strokeDasharray="1 1" /></Icon>
      </IconButton>
    </Row>
    <FormCode>Форма 2-НДФЛ<br />Код по КНД 1151078</FormCode>
    <Row $top={24} $gap={6}>
      <label htmlFor="sign">Признак</label>
      <SelectWrap><Select id="sign"><option>1 - сведения о доходах</option></Select><Arrow /></SelectWrap>
    </Row>
    <Row $top={9}>
      <label htmlFor="corr">Номер корректировки</label>
      <PlainField id="corr" $w={29} defaultValue="00" />
      <SelectWrap $w={140}><Select aria-label="Вид корректировки"><option>Первичная</option></Select><Arrow /></SelectWrap>
    </Row>
    <Inspection>9204 - ИФНС Ленинского р-на г. Севастополя</Inspection>
  </Form>
)

const CheckResults = () => {
  const yearRef = useRef(null)

  useEffect(() => {
    yearRef.current.select()
  }, [])

  return (
    <Results>
      <ResultsBar>
        <span>1 из 1</span>
        <Pager><Chevrons />Предыдущее</Pager>
        <Pager>Следующее<Chevrons right /></Pager>
        <Recheck>
          <Icon w={18} h={17} stroke="#587ab0" strokeWidth="2"><path d="M6.500 1.500C.5 4 .5 11 4 14.500M11.500 15.500c6-2.500 6-9.500 2.500-13" /><path d="M1.500 16.500H7V11zM16.500.5H11V6z" fill="#587ab0" stroke="none" /></Icon>
          Повторить проверку
        </Recheck>
        <Filters>
          <Filter $color="#ff0000"><input type="checkbox" defaultChecked /><Tick /><span>Ошибок <b>1</b></span></Filter>
          <Filter><input type="checkbox" /><span>Предупреждений <b>0</b></span></Filter>
          <Filter><input type="checkbox" defaultChecked /><Tick /><span>Проверен <b>1</b> контроль</span></Filter>
          <IconButton aria-label="Сохранить в PDF">
            <Icon w={20} h={20} stroke="none"><path d="M4 6V1h8l4 4v1M4 15v4h12v-4" stroke="#587ab0" strokeWidth="2" /><path d="M0 6.500h20v8H0z" fill="#587ab0" /><text x="10" y="13" fill="#fff" fontSize="8" fontWeight="700" fontFamily="Liberation Sans" textAnchor="middle">PDF</text></Icon>
          </IconButton>
          <IconButton aria-label="Подробнее">
            <Icon w={22} h={20}><circle cx="13" cy="8" r="7" /><path d="M13 4v8M9 8h8" strokeWidth="2.500" /><path d="M7.500 13L2 18.500" strokeWidth="3.500" /></Icon>
          </IconButton>
          <CloseButton aria-label="Закрыть результаты"><BigCross /></CloseButton>
        </Filters>
      </ResultsBar>
      <ResultTitle>Титульный лист</ResultTitle>
      <ErrorCard>
        <Icon w={14} h={18} stroke="none"><path d="M7 2c1 2 3 3 3 5 1 0 1-1 1-2 1.500 2 2 4 1 6.500-.5 1.500-2 2.500-2.500 2.500 0-2-1-3-2-4-.5 2-2 2-2 4C3 13 2 11 2.500 9c.3-1 .8-1.500 1-3 1 .5 1 1.500 1.200 2C6 6 7 5 7 2z" fill="#f0483c" /><path d="M2 16h10" stroke="#f2857c" strokeWidth="1.500" /></Icon>
        <div>
          <ErrorText>Необходимо сменить период</ErrorText>
          <ErrorText $note>Текущая версия отчета 5.06 (с 01.01.2021) не применяется</ErrorText>
          <Row $top={11} $gap={6}>
            <FixLabel htmlFor="fix">Отчетный год</FixLabel>
            <FixField id="fix" ref={yearRef} defaultValue="2018" />
          </Row>
        </div>
      </ErrorCard>
    </Results>
  )
}

const WindowsTaskbar = () => (
  <Taskbar>
    <Wallpaper viewBox="0 0 1366 40" preserveAspectRatio="none" aria-hidden="true">
      <path d="M203 0h15l-34 40h-14zM527 0h16l-35 40h-16zM953 0h23l-34 40h-24z" fill="#3f4466" />
    </Wallpaper>
    <StartButton aria-label="Пуск"><Icon w={26} h={26} stroke="none"><path d="M0 4l11-1.500V12.500H0zM12.500 2.300L26 .5v12H12.500zM0 13.800h11V24L0 22.500zM12.500 13.800H26v12l-13.500-1.800z" fill="#fff" /></Icon></StartButton>
    <TaskButton aria-label="Internet Explorer"><Icon size={30} stroke="none"><path fillRule="evenodd" d="M16 4c8 0 12.500 6 12 13.500H11.500c.5 4 6 5 8.500 1.500h7.500C25.500 25 21.500 28 16 28 8.500 28 4 22.500 4 16S8.500 4 16 4zm-4.500 9H21c-.5-5-9-5-9.500 0z" fill="#6fd0f5" /><path d="M28 7c1-4-2-6-9-2C10 9 1 21 3 27c1 2 4 1 7-1" stroke="#f5c02c" strokeWidth="2.500" /></Icon></TaskButton>
    <TaskButton $open aria-label="Проводник"><Icon w={34} h={30} stroke="none"><path d="M2 3h10l2 3h18v20H2z" fill="#e9cf7c" /><path d="M4 5h9v4h15v3H4z" fill="#fff" /><path d="M5 2h4v4H5z" fill="#2fa84f" /><path d="M13 5h4v3h-4z" fill="#d94a33" /><path d="M21 7h4v3h-4z" fill="#2a7fd0" /><path d="M2 10h30v17H2z" fill="#f5e4a2" /><path d="M6 30V19h22v11h-5v-5H11v5z" fill="#86c7e6" stroke="#5ba5cc" /></Icon></TaskButton>
    <TaskButton aria-label="Магазин"><Icon size={30} stroke="none"><rect width="30" height="30" fill="#038a03" /><path d="M4 9l21-2v19L5 23z" fill="#fff" /><path d="M9 9c0-7 8-7 9-1" stroke="#fff" strokeWidth="1.500" /><path d="M8 13l5-.5v4.500H8zM14 12.500l6-.5v5h-6zM8 18h5v4.500L8 22zM14 18h6v5.500l-6-1z" fill="#038a03" /></Icon></TaskButton>
    <OperaTask aria-label="Opera"><OperaLogo size={30} /></OperaTask>
    <TaskButton aria-label="Firefox"><Icon size={30} stroke="none"><circle cx="15" cy="15" r="14" fill="#2b6cb5" /><path d="M10 3c5-3 11-2 14 1-4 0-8 2-9 5z" fill="#5aa5dd" /><path d="M2 8c1 1 2 1 3 1 2-2 5-2 8-1-1 1-2 3-3 3 2 1 5 1 5 3-2 2-5 1-5 4 2 3 7 3 10 0 2-3 2-7-1-11 4 1 6 3 7 7 2-4 0-8-2-10 6 5 7 14 2 20-6 7-17 7-22 0C1 19 0 13 2 8z" fill="#e9731f" /><path d="M24 4c6 5 7 14 2 20-3 4-8 5-12 4 8-2 13-9 10-24z" fill="#f8c23a" /></Icon></TaskButton>
    <TaskButton aria-label="Chrome"><Icon size={30} stroke="none"><circle cx="15" cy="15" r="15" fill="#f5c945" /><path d="M2 7.500A15 15 0 0128 7.500H15L9 18z" fill="#db4437" /><path d="M2 7.500l7 11 6 4-1 7.500A15 15 0 012 7.500z" fill="#3ba55d" /><circle cx="15" cy="15" r="7" fill="#fff" /><circle cx="15" cy="15" r="5.500" fill="#4a86e8" /></Icon></TaskButton>
    <TaskButton $open aria-label="Удалённый рабочий стол"><Icon w={32} h={32} stroke="none"><path d="M2 2l25 3-2 19-20-3z" fill="#dfe3e8" /><path d="M4 4l21 2.500-2 15-17-2z" fill="#1231a8" /><path d="M15 5.500l10 1-2 15-5-.5z" fill="#5f86e0" /><ellipse cx="14" cy="28" rx="8" ry="3" fill="#dfe3e8" /><circle cx="24" cy="24" r="7.500" fill="#d9dad6" stroke="#8f9290" /><path d="M20 23l3 2-3 3M28 20l-3 2 3 3" stroke="#2f8a26" strokeWidth="2" /></Icon></TaskButton>
    <Tray>
      <Language>RU</Language>
      {tray.map(([name, art]) => (
        <TrayButton key={name} aria-label={name}><Icon stroke="none">{art}</Icon></TrayButton>
      ))}
      <Clock>16:52<br />03.01.2019</Clock>
    </Tray>
  </Taskbar>
)

const App = () => {
  return (
    <>
      <GlobalStyle />
      <Screen>
        <Workspace>
          <SidePanel />
          <Browser>
            <BrowserChrome />
            <Page>
              <Header />
              <Split>
                <Sections>
                  <Section href="#">Реквизиты</Section>
                  <Section href="#" $active><span>Титульный лист</span><span>1</span></Section>
                  <SubSection href="#">Разделы 2, 3 и приложение</SubSection>
                </Sections>
                <DocumentPane>
                  <BackLink href="#">К списку сотрудников</BackLink>
                  <ReportForm />
                  <ScrollThumb />
                </DocumentPane>
              </Split>
              <CheckResults />
            </Page>
          </Browser>
        </Workspace>
        <WindowsTaskbar />
      </Screen>
    </>
  )
}

export default App
